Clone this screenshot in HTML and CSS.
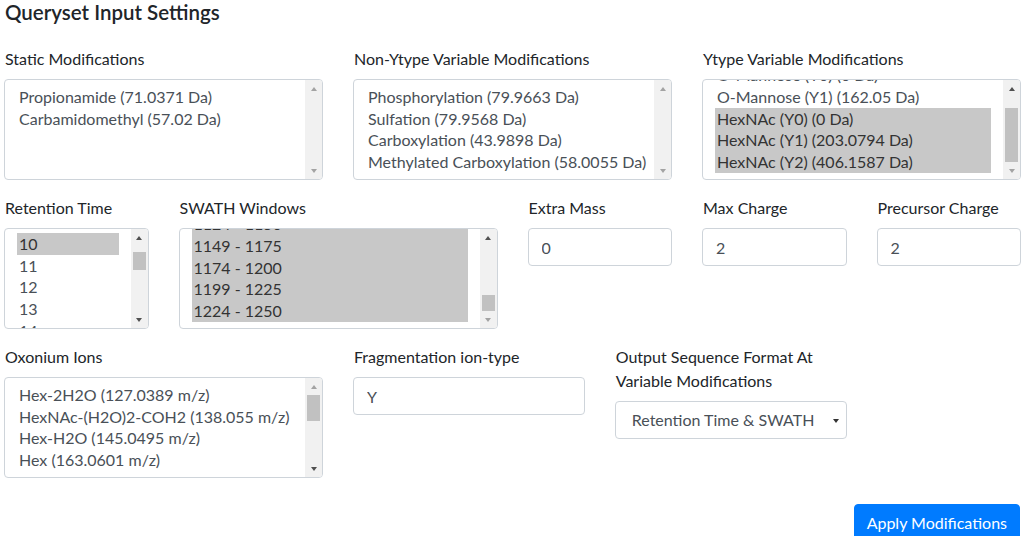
FILE: index.html
```html
<!DOCTYPE html>
<html lang="en">
<head>
<meta charset="utf-8">
<title>Queryset Input Settings</title>
<link rel="stylesheet" href="styles.css">
</head>
<body>
<div class="page">
  <h5 class="title">Queryset Input Settings</h5>
  <div class="form-grid">
    <div class="field span4">
      <label class="field-label">Static Modifications</label>
      <div class="listbox">
        <ul class="options">
          <li>Propionamide (71.0371 Da)</li>
          <li>Carbamidomethyl (57.02 Da)</li>
        </ul>
        <div class="scrollbar">
          <span class="sb-btn sb-up disabled"></span>
          <span class="sb-track"></span>
          <span class="sb-btn sb-down disabled"></span>
        </div>
      </div>
    </div>
    <div class="field span4">
      <label class="field-label">Non-Ytype Variable Modifications</label>
      <div class="listbox">
        <ul class="options">
          <li>Phosphorylation (79.9663 Da)</li>
          <li>Sulfation (79.9568 Da)</li>
          <li>Carboxylation (43.9898 Da)</li>
          <li>Methylated Carboxylation (58.0055 Da)</li>
        </ul>
        <div class="scrollbar">
          <span class="sb-btn sb-up disabled"></span>
          <span class="sb-track"></span>
          <span class="sb-btn sb-down disabled"></span>
        </div>
      </div>
    </div>
    <div class="field span4">
      <label class="field-label">Ytype Variable Modifications</label>
      <div class="listbox">
        <ul class="options">
          <li class="scrolled-row">O-Mannose (Y0) (0 Da)</li>
          <li>O-Mannose (Y1) (162.05 Da)</li>
          <li class="selected">HexNAc (Y0) (0 Da)</li>
          <li class="selected">HexNAc (Y1) (203.0794 Da)</li>
          <li class="selected">HexNAc (Y2) (406.1587 Da)</li>
        </ul>
        <div class="scrollbar">
          <span class="sb-btn sb-up"></span>
          <span class="sb-track"><span class="sb-thumb" style="margin-top:11px;height:54px"></span></span>
          <span class="sb-btn sb-down disabled"></span>
        </div>
      </div>
    </div>

    <div class="field span2">
      <label class="field-label">Retention Time</label>
      <div class="listbox">
        <ul class="options">
          <li class="selected nudged-row">10</li>
          <li>11</li>
          <li>12</li>
          <li>13</li>
          <li>14</li>
        </ul>
        <div class="scrollbar">
          <span class="sb-btn sb-up"></span>
          <span class="sb-track"><span class="sb-thumb" style="margin-top:6px;height:18px"></span></span>
          <span class="sb-btn sb-down"></span>
        </div>
      </div>
    </div>
    <div class="field span4">
      <label class="field-label">SWATH Windows</label>
      <div class="listbox">
        <ul class="options">
          <li class="selected scrolled-row">1124 - 1150</li>
          <li class="selected">1149 - 1175</li>
          <li class="selected">1174 - 1200</li>
          <li class="selected">1199 - 1225</li>
          <li class="selected">1224 - 1250</li>
        </ul>
        <div class="scrollbar">
          <span class="sb-btn sb-up"></span>
          <span class="sb-track"><span class="sb-thumb" style="margin-top:49px;height:16px"></span></span>
          <span class="sb-btn sb-down disabled"></span>
        </div>
      </div>
    </div>
    <div class="field span2">
      <label class="field-label" for="extra-mass">Extra Mass</label>
      <input class="text-input" id="extra-mass" type="text" value="0">
    </div>
    <div class="field span2">
      <label class="field-label" for="max-charge">Max Charge</label>
      <input class="text-input" id="max-charge" type="text" value="2">
    </div>
    <div class="field span2">
      <label class="field-label" for="precursor-charge">Precursor Charge</label>
      <input class="text-input" id="precursor-charge" type="text" value="2">
    </div>

    <div class="field span4">
      <label class="field-label">Oxonium Ions</label>
      <div class="listbox">
        <ul class="options">
          <li>Hex-2H2O (127.0389 m/z)</li>
          <li>HexNAc-(H2O)2-COH2 (138.055 m/z)</li>
          <li>Hex-H2O (145.0495 m/z)</li>
          <li>Hex (163.0601 m/z)</li>
        </ul>
        <div class="scrollbar">
          <span class="sb-btn sb-up disabled"></span>
          <span class="sb-track"><span class="sb-thumb" style="margin-top:0;height:26px"></span></span>
          <span class="sb-btn sb-down"></span>
        </div>
      </div>
    </div>
    <div class="field span3">
      <label class="field-label" for="frag-type">Fragmentation ion-type</label>
      <input class="text-input" id="frag-type" type="text" value="Y">
    </div>
    <div class="field span3">
      <label class="field-label" for="output-format">Output Sequence Format At Variable Modifications</label>
      <div class="select-wrap">
        <select class="select" id="output-format">
          <option>Retention Time &amp; SWATH</option>
        </select>
      </div>
    </div>
  </div>
  <div class="actions">
    <button class="btn-primary" type="button">Apply Modifications</button>
  </div>
</div>
</body>
</html>
```

FILE: styles.css
```css
* {
  box-sizing: border-box;
}

body {
  margin: 0;
  font-family: "Lato", "Open Sans", sans-serif;
  font-size: 16px;
  line-height: 1.5;
  color: #212529;
  background: #fff;
  overflow: hidden;
}

.page {
  padding-left: 4px;
  width: 1026px;
}

.title {
  margin: 0 0 23px;
  padding-left: 1px;
  font-size: 20.5px;
  font-weight: 600;
  line-height: 24px;
}

.form-grid {
  display: grid;
  grid-template-columns: repeat(12, 57.25px);
  column-gap: 30px;
  row-gap: 16px;
  align-items: start;
}

.field {
  display: flex;
  flex-direction: column;
  min-width: 0;
}

.span2 { grid-column: span 2; }
.span3 { grid-column: span 3; }
.span4 { grid-column: span 4; }

.field-label {
  display: block;
  margin-bottom: 8px;
  padding-left: 1px;
}

.listbox {
  display: flex;
  height: 101px;
  border: 1px solid #ced4da;
  border-radius: 4px;
  overflow: hidden;
  background: #fff;
  color: #495057;
}

.options {
  flex: 1;
  min-width: 0;
  list-style: none;
  margin: 0;
  padding: 6px 12px;
  overflow: hidden;
  line-height: 21.7px;
}

.options li {
  white-space: nowrap;
  padding-left: 2px;
}

.options li.selected {
  background: #c8c8c8;
  color: #333;
}

.options li.scrolled-row {
  margin-top: -21.7px;
}

.options li.nudged-row {
  margin-top: -2px;
}

.scrollbar {
  flex: none;
  width: 17px;
  display: flex;
  flex-direction: column;
  background: #f1f1f1;
}

.sb-btn {
  flex: none;
  height: 17px;
  display: flex;
  align-items: center;
  justify-content: center;
}

.sb-btn::before {
  content: "";
  width: 0;
  height: 0;
  border-left: 3.5px solid transparent;
  border-right: 3.5px solid transparent;
}

.sb-up::before {
  border-bottom: 4px solid #505050;
}

.sb-down::before {
  border-top: 4px solid #505050;
}

.sb-up.disabled::before {
  border-bottom-color: #a3a3a3;
}

.sb-down.disabled::before {
  border-top-color: #a3a3a3;
}

.sb-track {
  flex: 1;
  display: flex;
  flex-direction: column;
  padding: 0 2px;
}

.sb-thumb {
  display: block;
  background: #c1c1c1;
}

.text-input {
  display: block;
  width: 100%;
  height: 38px;
  padding: 6px 12px 6px 13px;
  border: 1px solid #ced4da;
  border-radius: 4px;
  font: inherit;
  line-height: 24px;
  color: #495057;
  background: #fff;
  outline: none;
}

.select-wrap {
  position: relative;
}

.select-wrap::after {
  content: "";
  position: absolute;
  right: 8px;
  top: 18px;
  width: 0;
  height: 0;
  border-left: 3px solid transparent;
  border-right: 3px solid transparent;
  border-top: 4px solid #333;
  pointer-events: none;
}

.select {
  display: block;
  width: 100%;
  height: 38px;
  padding: 6px 12px 6px 16px;
  border: 1px solid #ced4da;
  border-radius: 4px;
  font: inherit;
  line-height: 24px;
  color: #495057;
  background: #fff;
  appearance: none;
  -webkit-appearance: none;
  outline: none;
}

.actions {
  display: flex;
  justify-content: flex-end;
  margin-top: 26px;
  width: 1017px;
  padding-right: 1px;
}

.btn-primary {
  padding: 6px 12px;
  border: 1px solid #007bff;
  border-radius: 4px;
  background: #007bff;
  color: #fff;
  font: inherit;
  line-height: 24px;
}
```
